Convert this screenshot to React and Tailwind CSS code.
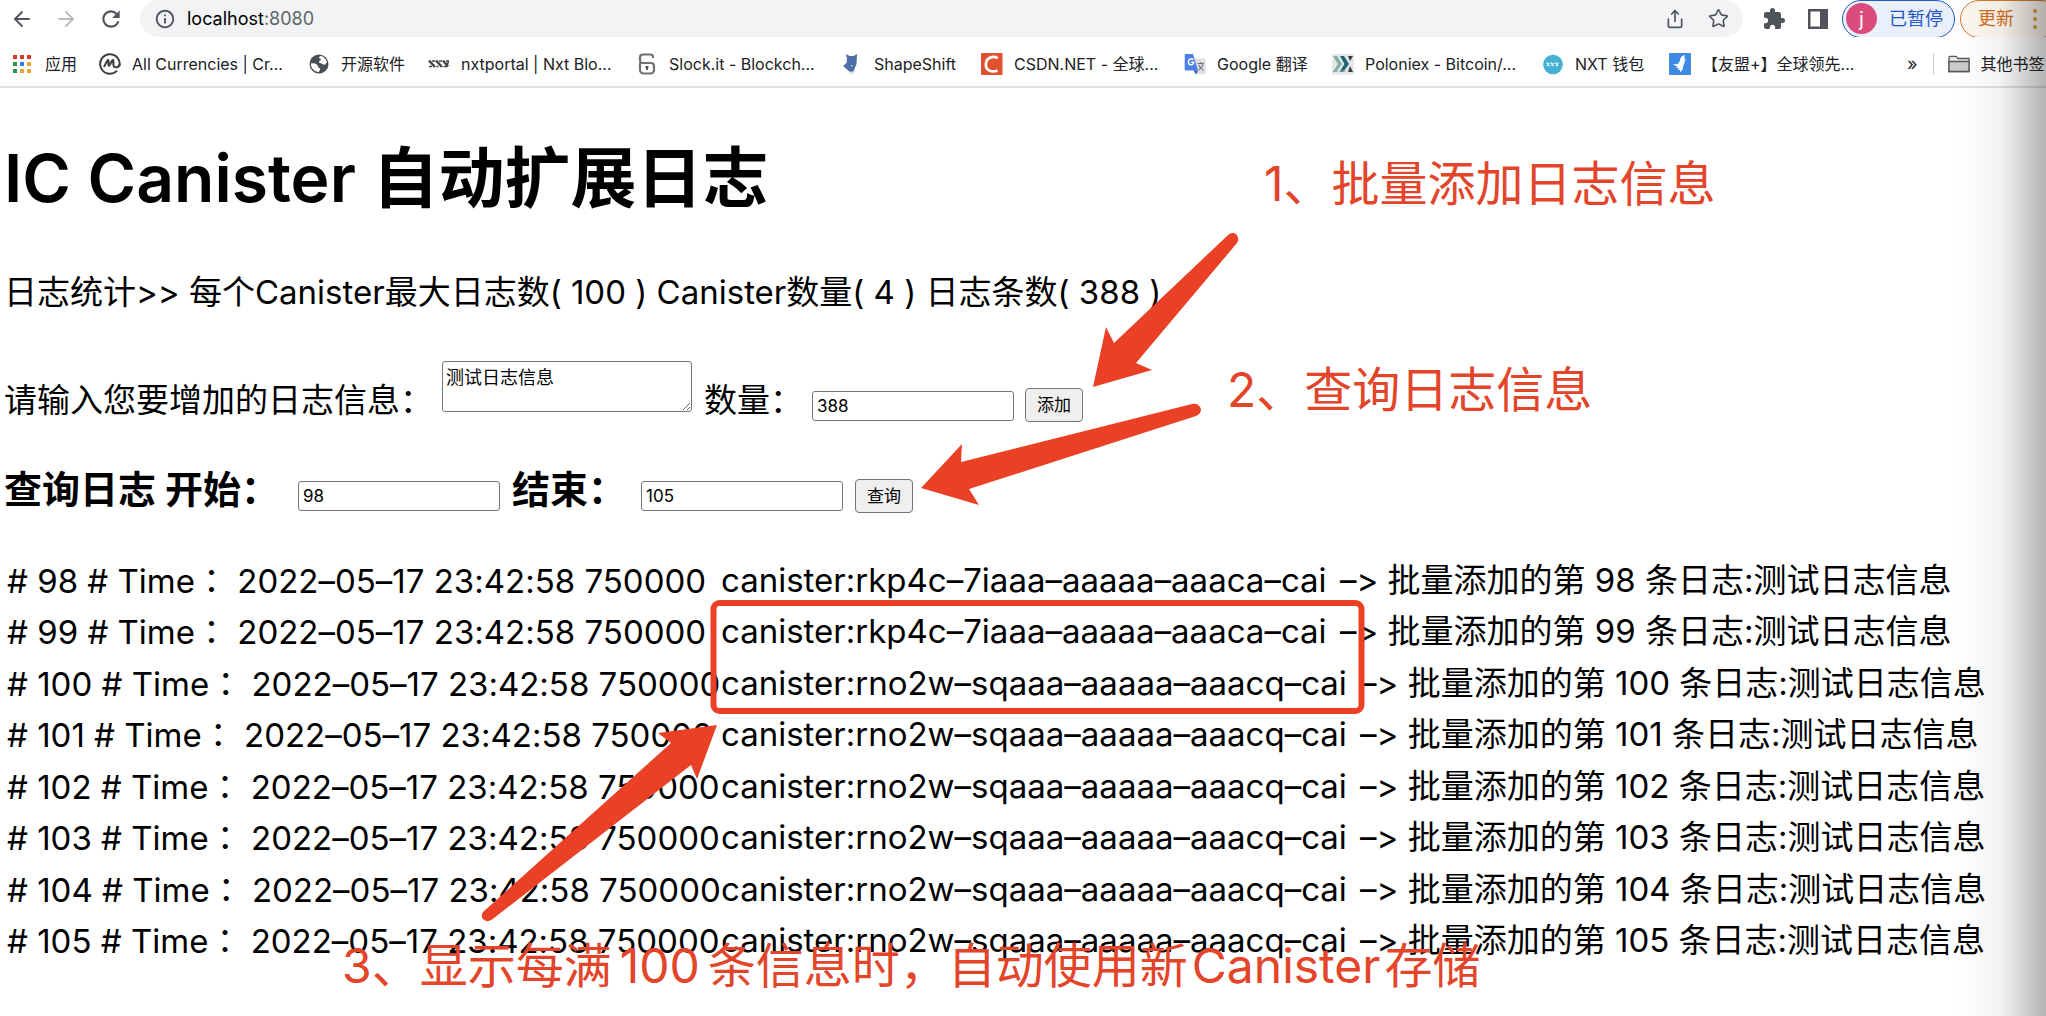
import { ArrowLeft, ArrowRight, Share, Star } from "lucide-react";
import { MdExtension, MdRefresh, MdInfoOutline } from "react-icons/md";

const AppsIcon = () => (
  <svg viewBox="0 0 22 22" className="size-[22px]">
    {["#d93a2b", "#d93a2b", "#d93a2b", "#2e9148", "#2f7de9", "#e3a534", "#2e9148", "#e3a534", "#e3a534"].map((c, i) => (
      <rect key={i} x={1 + (i % 3) * 7} y={2 + Math.floor(i / 3) * 7} width="4" height="4" fill={c} />
    ))}
  </svg>
);

const MarketCapIcon = () => (
  <svg viewBox="0 0 22 22" className="size-[22px]" fill="none" stroke="#3c4043" strokeWidth="2" strokeLinecap="round">
    <path d="M20.6 12.5c.9-6-3.600-11.300-9.600-11.300a9.800 9.800 0 1 0 6.500 17.100" />
    <path d="M5.300 13.200 8.300 7.600c.5-.9 1.200-.7 1.200.2v4.200c0 1 .6 1 1 .3l2.700-4.700c.5-.8 1.200-.7 1.200.2v3.900c0 3.200 5.200 3.700 5.900 0" />
  </svg>
);

const GlobeIcon = () => (
  <svg viewBox="0 0 22 22" className="size-[22px]">
    <circle cx="11" cy="11" r="9.500" fill="#4a4d51" />
    <path d="M2.800 10.500c3-.4 5 .1 6.500 1.500 1.200 1.100.4 2.200 1.700 2.800 1.500.6 1.700 1.500.6 2.600l-.7 1.600c-4.500 0-8.200-3.800-8.100-8.500Z" fill="#fff" />
    <path d="M13 2.900c3 .8 5.300 3 6 6l-1.700 2.600c-1.600.8-2.600-.2-3.600-.9-1.400-.9-2.500-.3-2.600-1.600-.1-1.500 1.900-1.200 1.900-2.700 0-1-2.200-.6-2.200-1.700.1-.7 1-1.400 2.200-1.700Z" fill="#fff" />
  </svg>
);

const NxtIcon = () => (
  <svg viewBox="0 0 22 22" className="size-[22px]" stroke="#444" fill="none">
    <path d="m1 7.500 6 6.500M8 7.500l6 6.500M15 7.500l5 6" strokeWidth="2.500" />
    <path d="M1 13.500h3M8.500 13.500h2M15.500 13.500h3l2-5M4 8h3M11 8h3M18 8h3" strokeWidth="1.600" />
  </svg>
);

const SlockIcon = () => (
  <svg viewBox="0 0 22 22" className="size-[22px]" fill="none" stroke="#707070" strokeWidth="2.200">
    <path d="M17 5V4.200C17 2.800 16 1.500 14.500 1.500H7A3 3 0 0 0 4 4.500v3c0 1.500 1 2.500 2.500 2.500H15a3 3 0 0 1 3 3v4a3.500 3.500 0 0 1-3.500 3.500h-7A3.500 3.500 0 0 1 4 17V10" />
    <path d="M9.500 14h3M11 14v3" strokeWidth="1.600" stroke="#333" />
  </svg>
);

const ShapeShiftIcon = () => (
  <svg viewBox="0 0 22 22" className="size-[22px]">
    <path d="m5 1 3.500 2h4L16 1l-.5 10-3 7.500-3.500.5L2 13l3.500-3L6 6 5 1Z" fill="#4a6ea5" />
    <path d="m7 18.500 4 .5 4-2-2.500 4-3.500.5-2-3Z" fill="#e2e4e9" />
    <path d="m10 12 1.500 1.500" stroke="#fff" />
  </svg>
);

const CsdnIcon = () => (
  <svg viewBox="0 0 22 22" className="size-[22px]">
    <rect width="21.500" height="22" fill="#e1512f" />
    <path d="M16.800 5.100C11.500 2.400 5 4.700 4.900 11.400c-.1 6.300 6 8.300 11.600 6" fill="none" stroke="#fff" strokeWidth="2.700" />
  </svg>
);

const TranslateIcon = () => (
  <svg viewBox="0 0 22 22" className="size-[22px]">
    <path d="M9 5.500h11c1 0 1.500.6 1.500 1.500v13c0 .8-.5 1.300-1.300 1.300H12L9 5.500Z" fill="#dcdee2" />
    <path d="M2 1h7l5 16.500H2.200C1.300 17.500.7 17 .7 16V2.300C.7 1.500 1.200 1 2 1Z" fill="#4c7fe8" />
    <path d="m9.500 17.500 2.500 4 2-4Z" fill="#2f56b5" />
    <path d="M9.500 6.500c-2.600-1.900-5.200 0-5.100 2.600.1 3.300 5.100 3.800 5.300.2H7.200" fill="none" stroke="#fff" strokeWidth="1.400" />
    <path d="M13.500 10.500h6.500M16.800 9v1.500M19 10.500c-.6 3-2.600 5.500-4.500 6.500M14.800 12c.8 2.200 2.400 4 4.700 5.200" fill="none" stroke="#70757c" strokeWidth="1.100" />
  </svg>
);

const PoloniexIcon = () => (
  <svg viewBox="0 0 22 22" className="size-[22px]">
    <rect y="1" width="22" height="20.500" fill="#e3e6e8" />
    <path d="M1 3h4l5 8-6 8H1l5-8Z" fill="#7cae9f" />
    <path d="M8 3h4l5 8-6 8H7.500l5-8Z" fill="#1e6470" />
    <path d="M16 3h5l-3 5ZM18 13l3 6h-5Z" fill="#333c42" />
    <path d="M1 18h5M8 18h6" stroke="#9fa8aa" />
  </svg>
);

const WalletIcon = () => (
  <svg viewBox="0 0 22 22" className="size-[22px]">
    <circle cx="11" cy="11.500" r="9.800" fill="#45b0d3" />
    <path d="m4.500 9.500 3 3.500M8.700 9.500l3 3.500M13 9.500l3 3.500M5 13l2-3M9.500 13l2-3M14 13l2.500-3.500" stroke="#e9f7fb" strokeWidth="1.200" />
  </svg>
);

const UmengIcon = () => (
  <svg viewBox="0 0 22 22" className="size-[22px]">
    <rect width="22" height="22" fill="#3f8ae6" />
    <path d="M15.500 2c.3 1.500.2 2.700-.2 3.900l1.900.6-1.700 1.100c.3 2.200-.3 3.700-1.300 5.200.2 2.800-1 4.800-3.200 6.700l.2-2.600-2.400-.2 1.300-1.500-3.300-.5 2.200-1.200c-2-.2-3.600-1-4.800-2.500l4.200.3C10.500 9 11 8 11.200 6.500 11.500 4.300 13 2.800 15.500 2Z" fill="#fff" />
  </svg>
);

const FolderIcon = () => (
  <svg viewBox="0 0 22 22" className="size-[22px]" stroke="#55585b" strokeWidth="1.300">
    <path d="M1 18.500V4.500c0-.8.400-1.200 1.200-1.200h5.300c.8 0 1.200.3 1.600 1l.8 1.200H21v13H1Z" fill="#e8e8e8" />
    <path d="M1 8.500h20v10H1Z" fill="#c9cacb" />
  </svg>
);

const BOOKMARKS = [
  ["应用", AppsIcon, "w-[87px]"],
  ["All Currencies | Cr...", MarketCapIcon, "w-[209px]"],
  ["开源软件", GlobeIcon, "w-[120px]"],
  ["nxtportal | Nxt Blo...", NxtIcon, "w-[208px]"],
  ["Slock.it - Blockch...", SlockIcon, "w-[205px]"],
  ["ShapeShift", ShapeShiftIcon, "w-[140px]"],
  ["CSDN.NET - 全球...", CsdnIcon, "w-[203px]"],
  ["Google 翻译", TranslateIcon, "w-[148px]"],
  ["Poloniex - Bitcoin/...", PoloniexIcon, "w-[210px]"],
  ["NXT 钱包", WalletIcon, "w-[127px]"],
  ["【友盟+】全球领先...", UmengIcon, "w-[200px]"],
];

const LOGS = [98, 99, 100, 101, 102, 103, 104, 105].map((n) => ({
  n,
  canister: n < 100 ? "rkp4c–7iaaa–aaaaa–aaaca–cai" : "rno2w–sqaaa–aaaaa–aaacq–cai",
}));

const FIELD = "h-[30px] w-[202px] rounded-[3px] border border-[#767676] bg-white px-1 text-[17px] leading-6";
const BUTTON = "h-[34px] w-[58px] rounded-[4px] border border-[#767676] bg-[#efefef] text-[17px] leading-6";

function Toolbar() {
  return (
    <div className="flex h-[37px] items-center overflow-hidden text-[#50545a]">
      <div className="flex w-[140px] shrink-0 items-center gap-[20px] pl-[10px]">
        <button aria-label="后退"><ArrowLeft size={24} strokeWidth={1.8} /></button>
        <button aria-label="前进" className="text-[#b9bbbe]"><ArrowRight size={24} strokeWidth={1.8} /></button>
        <button aria-label="刷新"><MdRefresh size={26} /></button>
      </div>
      <div className="flex h-[37px] min-w-0 flex-1 items-center rounded-full bg-[#f1f3f4] pr-[14px] pl-[14px]">
        <MdInfoOutline size={22} />
        <span className="flex-1 pl-[11px] text-[18px] text-[#5f6368]"><span className="text-black">localhost</span>:8080</span>
        <button aria-label="分享" className="mr-[23px]"><Share size={20} strokeWidth={2} /></button>
        <button aria-label="收藏"><Star size={21} strokeWidth={1.8} /></button>
      </div>
      <div className="flex w-[303px] shrink-0 items-center pl-[19px]">
        <button aria-label="扩展程序"><MdExtension size={24} /></button>
        <button aria-label="侧边栏" className="ml-[22px]">
          <svg viewBox="0 0 20 20" className="size-[20px]">
            <path d="M0 0h20v20H0ZM2.500 2.500v15H12v-15Z" fillRule="evenodd" fill="#50545a" />
          </svg>
        </button>
        <button className="ml-[14px] flex h-[38px] w-[113px] shrink-0 items-center gap-[12px] rounded-full border border-[#2457c5] bg-[#e9f0fb] pl-[3px] text-[18px] text-[#1f55c4]">
          <span className="flex size-[31px] items-center justify-center rounded-full bg-[#db4b7e] text-[20px] text-white">j</span>
          已暂停
        </button>
        <button className="ml-[5px] flex h-[38px] w-[100px] shrink-0 items-center gap-[19px] rounded-full border border-[#d07b30] bg-[#fef8f1] pl-[17px] text-[18px] text-[#cf6f1c]">
          更新
          <svg viewBox="0 0 4 20" className="h-[20px] w-[4px]" fill="#e09a3c">
            <circle cx="2" cy="2" r="2" /><circle cx="2" cy="10" r="2" /><circle cx="2" cy="18" r="2" />
          </svg>
        </button>
      </div>
    </div>
  );
}

function BookmarkBar() {
  return (
    <nav className="flex h-[51px] items-center overflow-hidden border-b-2 border-[#dfe0e2] pt-[4px] pl-[12px] text-[16px] whitespace-nowrap text-[#202124]">
      {BOOKMARKS.map(([label, Icon, width]) => (
        <a key={label} href="#" className={`flex shrink-0 items-center gap-[11px] ${width}`}>
          <Icon />
          {label}
        </a>
      ))}
      <button aria-label="更多书签" className="ml-[38px] text-[18px] leading-6">»</button>
      <span className="mr-[14px] ml-[15px] h-[22px] w-px bg-[#c8c9cb]" />
      <a href="#" className="flex shrink-0 items-center gap-[11px]">
        <FolderIcon />
        其他书签
      </a>
    </nav>
  );
}

function Annotations() {
  return (
    <div className="pointer-events-none absolute inset-0 text-[48px] leading-[56px] whitespace-nowrap text-[#e2452a]">
      <svg className="absolute inset-0 size-full" fill="#ea4025">
        <path d="M1093 387 1106 327 1114 343 1227 236Q1231 231 1236 234 1240 238 1237 243L1136 363 1152 370Z" />
        <path d="M921 488 962 444 961 462 1192 404Q1199 403 1201 409 1201 414 1196 416L969 489 979 505Z" />
        <path d="M717 725 658 733 671 743 483 912Q480 917 484 920 489 923 494 918L691 765 697 779Z" />
        <rect x="713.500" y="603" width="648" height="108" rx="6" fill="none" stroke="#ea4025" strokeWidth="6" />
      </svg>
      <p className="absolute top-[156px] left-[1264px]">1、批量添加日志信息</p>
      <p className="absolute top-[362px] left-[1227px]">2、查询日志信息</p>
      <p className="absolute top-[938px] left-[342px]">
        3、显示每满<span className="mx-2">100</span>条信息时，自动使用新<span className="mx-1">Canister</span>存储
      </p>
    </div>
  );
}

export default function App() {
  return (
    <div lang="zh-CN" className="relative min-h-screen overflow-hidden bg-white font-['Inter','Noto_Sans_CJK_SC',sans-serif] text-black [font-variant-ligatures:none]">
      <Toolbar />
      <BookmarkBar />
      <main className="pl-[4px] text-[33px] leading-[48px]">
        <h1 className="pt-[42px] text-[66px] leading-[96px] font-semibold">IC Canister 自动扩展日志</h1>
        <p className="mt-[42px] whitespace-pre">{"日志统计>> 每个Canister最大日志数( 100 ) Canister数量( 4 ) 日志条数( 388 )"}</p>
        <form className="mt-[45px] flex h-[64px] items-center whitespace-nowrap">
          <label htmlFor="message" className="w-[438px] pt-[14px]">请输入您要增加的日志信息：</label>
          <textarea id="message" defaultValue="测试日志信息" className="h-[51px] w-[250px] resize self-start rounded-[3px] border border-[#767676] px-[3px] py-1 text-[18px] leading-6 whitespace-pre-wrap" />
          <label htmlFor="count" className="w-[108px] pt-[14px] pl-[12px]">数量：</label>
          <input id="count" defaultValue="388" className={`mt-[26px] ml-[12px] ${FIELD}`} />
          <button type="button" className={`mt-[24px] ml-[11px] ${BUTTON}`}>添加</button>
        </form>
        <form className="mt-[36px] flex h-[56px] items-center whitespace-nowrap">
          <label htmlFor="from" className="w-[294px] text-[38px] font-bold">查询日志 开始：</label>
          <input id="from" defaultValue="98" className={`mt-[14px] ${FIELD}`} />
          <label htmlFor="to" className="w-[141px] pl-[12px] text-[38px] font-bold">结束：</label>
          <input id="to" defaultValue="105" className={`mt-[14px] ${FIELD}`} />
          <button type="button" className={`mt-[14px] ml-[12px] ${BUTTON}`}>查询</button>
        </form>
        <ul className="mt-[37px]">
          {LOGS.map(({ n, canister }) => (
            <li key={n} className="flex items-center whitespace-pre odd:h-[51px] even:h-[52px]">
              <span className="w-[717px] shrink-0 pl-[3px]">
                {`# ${n} # Time`}
                <span lang="zh-TW" className="font-['Noto_Sans_CJK_TC',sans-serif]">：</span>
                {" 2022–05–17 23:42:58 750000"}
              </span>
              <span className="mr-1">{`canister:${canister}`}</span>
              <span>{` –> 批量添加的第 ${n} 条日志:测试日志信息`}</span>
            </li>
          ))}
        </ul>
      </main>
      <Annotations />
      <div className="pointer-events-none absolute inset-y-0 right-0 w-[90px] bg-linear-to-r from-transparent via-black/5 to-black/30" />
    </div>
  );
}
